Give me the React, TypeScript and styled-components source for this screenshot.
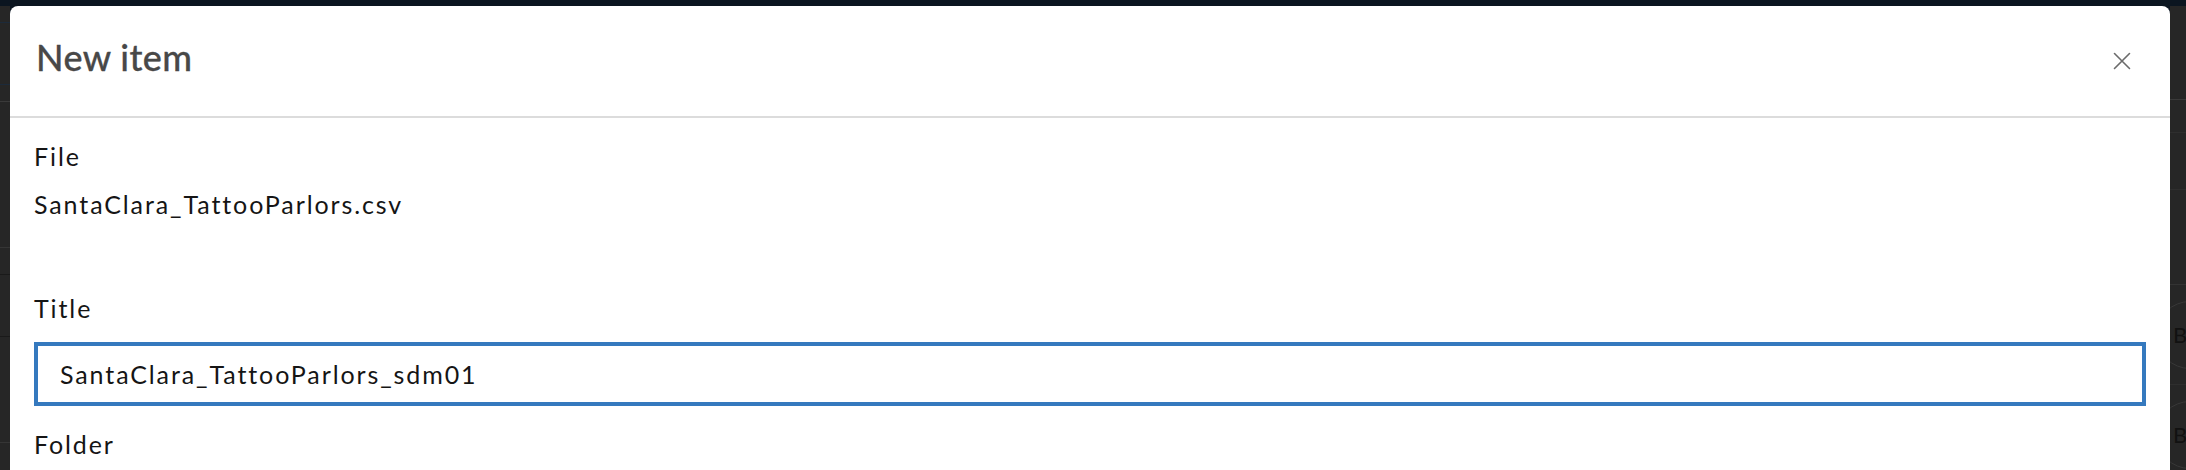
import React from "react";
import styled, { createGlobalStyle } from "styled-components";

const GlobalStyle = createGlobalStyle`
  html, body { margin: 0; padding: 0; }
  body {
    width: 2186px;
    height: 470px;
    overflow: hidden;
    font-family: "Lato", "Noto Sans", sans-serif;
    -webkit-font-smoothing: antialiased;
  }
`;

const Page = styled.div`
  height: 470px;
  background: #0b1520;
  padding-top: 6px;
  box-sizing: border-box;
  display: flex;
  overflow: hidden;
`;

const SideStrip = styled.div<{ $width: number }>`
  width: ${(p) => p.$width}px;
  flex: none;
  background: #262626;
  display: flex;
  flex-direction: column;
  overflow: hidden;
`;

const StripRow = styled.div<{ $h: number; $line: string }>`
  height: ${(p) => p.$h}px;
  flex: none;
  border-bottom: 1px solid ${(p) => p.$line};
  box-sizing: border-box;
`;

const AvatarRow = styled.div`
  height: 100px;
  flex: none;
  display: flex;
  align-items: center;
  border-bottom: 1px solid #2e2e2e;
  box-sizing: border-box;
`;

const Avatar = styled.div`
  width: 68px;
  height: 68px;
  flex: none;
  margin-left: -14px;
  border: 1px solid #383838;
  border-radius: 50%;
  box-sizing: border-box;
  display: flex;
  align-items: center;
  padding-left: 16px;
  font-size: 22px;
  color: #111;
  font-family: "Lato", sans-serif;
`;

const Dialog = styled.section`
  flex: 1;
  min-width: 0;
  background: #ffffff;
  border-radius: 8px 8px 0 0;
  display: flex;
  flex-direction: column;
`;

const Header = styled.header`
  height: 112px;
  flex: none;
  box-sizing: border-box;
  border-bottom: 2px solid #dcdcdc;
  display: flex;
  align-items: center;
  justify-content: space-between;
  padding: 0 24px 0 26px;
`;

const Heading = styled.h2`
  margin: 0 0 8px 0;
  font-size: 36px;
  line-height: 40px;
  font-weight: 500;
  letter-spacing: 0.4px;
  color: #484848;
  -webkit-text-stroke: 0.3px #484848;
`;

const CloseButton = styled.button`
  width: 48px;
  height: 48px;
  border: none;
  background: transparent;
  padding: 0;
  display: flex;
  align-items: center;
  justify-content: center;
  cursor: pointer;
  color: #6b6b6b;
`;

const Body = styled.div`
  padding: 22px 24px 0 24px;
  display: flex;
  flex-direction: column;
`;

const Field = styled.div<{ $gap: number; $after: number }>`
  display: flex;
  flex-direction: column;
  gap: ${(p) => p.$gap}px;
  margin-bottom: ${(p) => p.$after}px;
`;

const Label = styled.label`
  font-size: 25px;
  line-height: 32px;
  letter-spacing: 1.9px;
  color: #151515;
`;

const Value = styled.div`
  font-size: 25px;
  line-height: 32px;
  letter-spacing: 1.9px;
  color: #151515;
`;

const TextInput = styled.input`
  height: 64px;
  width: 100%;
  box-sizing: border-box;
  border: 4px solid #3579be;
  outline: none;
  padding: 0 22px;
  font-family: "Lato", "Noto Sans", sans-serif;
  font-size: 25px;
  letter-spacing: 1.9px;
  color: #151515;
  background: #fff;
`;

const CloseIcon = () => (
  <svg width="18" height="18" viewBox="0 0 18 18" fill="none">
    <path d="M1.5 1.5 L16.5 16.5 M16.5 1.5 L1.5 16.5" stroke="currentColor" strokeWidth="1.6" strokeLinecap="round" />
  </svg>
);

export default function App() {
  return (
    <>
      <GlobalStyle />
      <Page>
        <SideStrip $width={10}>
          <StripRow $h={17} $line="#1c2a3a" />
          <StripRow $h={62} $line="#1c2a3a" />
          <StripRow $h={17} $line="#3a3a3a" />
          <StripRow $h={146} $line="#353535" />
          <StripRow $h={27} $line="#1a1a1a" />
          <StripRow $h={62} $line="#1a1a1a" />
          <StripRow $h={106} $line="#353535" />
        </SideStrip>
        <Dialog>
          <Header>
            <Heading>New item</Heading>
            <CloseButton aria-label="Close">
              <CloseIcon />
            </CloseButton>
          </Header>
          <Body>
            <Field $gap={16} $after={72}>
              <Label>File</Label>
              <Value>SantaClara_TattooParlors.csv</Value>
            </Field>
            <Field $gap={18} $after={22}>
              <Label htmlFor="title">Title</Label>
              <TextInput id="title" defaultValue="SantaClara_TattooParlors_sdm01" />
            </Field>
            <Field $gap={0} $after={0}>
              <Label>Folder</Label>
            </Field>
          </Body>
        </Dialog>
        <SideStrip $width={16}>
          <StripRow $h={94} $line="#3a3a3a" />
          <StripRow $h={33} $line="#2e2e2e" />
          <StripRow $h={57} $line="#2e2e2e" />
          <StripRow $h={95} $line="#333333" />
          <AvatarRow>
            <Avatar>B</Avatar>
          </AvatarRow>
          <AvatarRow>
            <Avatar>B</Avatar>
          </AvatarRow>
        </SideStrip>
      </Page>
    </>
  );
}
